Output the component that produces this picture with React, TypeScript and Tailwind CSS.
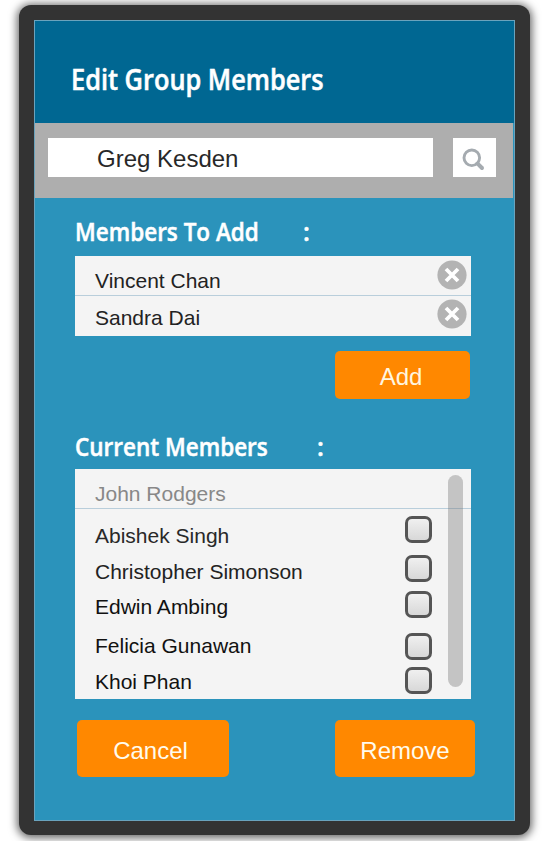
const headingFont = "font-['Open_Sans','Noto_Sans',sans-serif] font-semibold whitespace-nowrap text-white [-webkit-text-stroke:0.5px_white]";

const pending = [
  { name: "Vincent Chan", row: "h-10 border-b border-[#b9cedb]", text: "mt-[13px]", icon: "mt-1" },
  { name: "Sandra Dai", row: "h-10", text: "mt-[10px]", icon: "mt-[3px]" },
];

const members = [
  { name: "Abishek Singh", row: "h-10", text: "mt-[15px] text-[#282828]", box: "mt-[7px]" },
  { name: "Christopher Simonson", row: "h-[37px]", text: "mt-[11px] text-[#222]", box: "mt-1.5" },
  { name: "Edwin Ambing", row: "h-[38px]", text: "mt-[9px] text-[#111]", box: "mt-[5px]" },
  { name: "Felicia Gunawan", row: "h-[39px]", text: "mt-[10px] text-[#111]", box: "mt-[9px]" },
  { name: "Khoi Phan", row: "h-9", text: "mt-[7px] text-[#111]", box: "mt-1" },
];

function RemoveIcon() {
  return (
    <svg viewBox="0 0 30 30" className="size-[30px]">
      <circle cx="15" cy="15" r="14.6" fill="#b3b3b3" />
      <path d="M9 9 21 21M21 9 9 21" stroke="#fff" strokeWidth="3.8" fill="none" />
    </svg>
  );
}

function SearchIcon() {
  return (
    <svg viewBox="0 0 24 24" className="size-6" fill="none" stroke="#a5abb0">
      <circle cx="10.8" cy="10.8" r="7.8" strokeWidth="2.9" />
      <path d="M16.6 16.6 21 21" strokeWidth="4" strokeLinecap="round" />
    </svg>
  );
}

export default function App() {
  return (
    <div className="flex h-[841px] w-[543px] overflow-hidden bg-white pt-[5px] pl-[19px] font-['Liberation_Sans',Arial,sans-serif] text-[21px] leading-6">
      <div className="h-[830px] w-[511px] rounded-[12px] bg-[#333] p-[15px] shadow-[0_1px_9px_2px_rgba(0,0,0,0.6)]">
        <div className="flex h-[801px] w-[481px] flex-col border border-[#6aa3bd] bg-[#2b93bb]">
          <header className="flex h-[102px] shrink-0 items-center bg-[#006792] pt-[14px] pl-9">
            <h1 className={`origin-left scale-x-[0.905] text-[28px] leading-8 ${headingFont}`}>Edit Group Members</h1>
          </header>
          <div className="flex h-[75px] w-[478px] shrink-0 gap-5 bg-[#aeaeae] pt-[15px] pl-[13px]">
            <div className="flex h-[39px] w-[385px] items-center bg-white pt-[2px] pl-[49px] text-2xl text-[#282828]">Greg Kesden</div>
            <button className="flex h-[39px] w-[43px] items-center justify-center bg-white pt-[3px] pr-1">
              <SearchIcon />
            </button>
          </div>

          <section className="ml-10 flex w-[396px] flex-col">
            <h2 className={`mt-[17px] flex h-[41px] text-[25px] leading-8 ${headingFont}`}>
              <span className="w-[228px] origin-left scale-x-[0.9]">Members To Add</span>
              <span>:</span>
            </h2>
            <ul className="h-20 bg-[#f4f4f4] text-[#222]">
              {pending.map((p) => (
                <li key={p.name} className={`flex items-start justify-between pr-1 pl-5 ${p.row}`}>
                  <span className={p.text}>{p.name}</span>
                  <span className={p.icon}><RemoveIcon /></span>
                </li>
              ))}
            </ul>
            <button className="mt-[15px] mr-px h-12 w-[135px] self-end rounded-[5px] bg-[#ff8800] pt-1 pr-[3px] text-2xl text-[#fff6e0]">Add</button>
          </section>

          <section className="ml-10 flex w-[396px] flex-col">
            <h2 className={`mt-[31px] flex h-[39px] text-[25px] leading-8 ${headingFont}`}>
              <span className="w-[242px] origin-left scale-x-[0.9]">Current Members</span>
              <span>:</span>
            </h2>
            <div className="relative h-[230px] bg-[#f4f4f4]">
              <div className="h-10 border-b border-[#b9cedb] pt-[13px] pl-5 text-[#888]">John Rodgers</div>
              <ul>
                {members.map((m) => (
                  <li key={m.name} className={`flex items-start justify-between pr-[39px] pl-5 ${m.row}`}>
                    <span className={m.text}>{m.name}</span>
                    <span className={`size-[27px] rounded-[7px] border-3 border-[#555] bg-linear-to-b from-[#f0f0f0] to-[#d8d8d8] ${m.box}`} />
                  </li>
                ))}
              </ul>
              <div className="absolute top-[6px] right-[8.5px] h-[212px] w-[15px] rounded-full bg-[#777]/38" />
            </div>
          </section>

          <div className="mt-[21px] ml-[42px] flex w-[398px] justify-between text-2xl text-[#fffbed]">
            <button className="h-[57px] w-[152px] rounded-[5px] bg-[#ff8800] pt-1 pr-[5px]">Cancel</button>
            <button className="h-[57px] w-[140px] rounded-[5px] bg-[#ff8800] pt-1">Remove</button>
          </div>
        </div>
      </div>
    </div>
  );
}
